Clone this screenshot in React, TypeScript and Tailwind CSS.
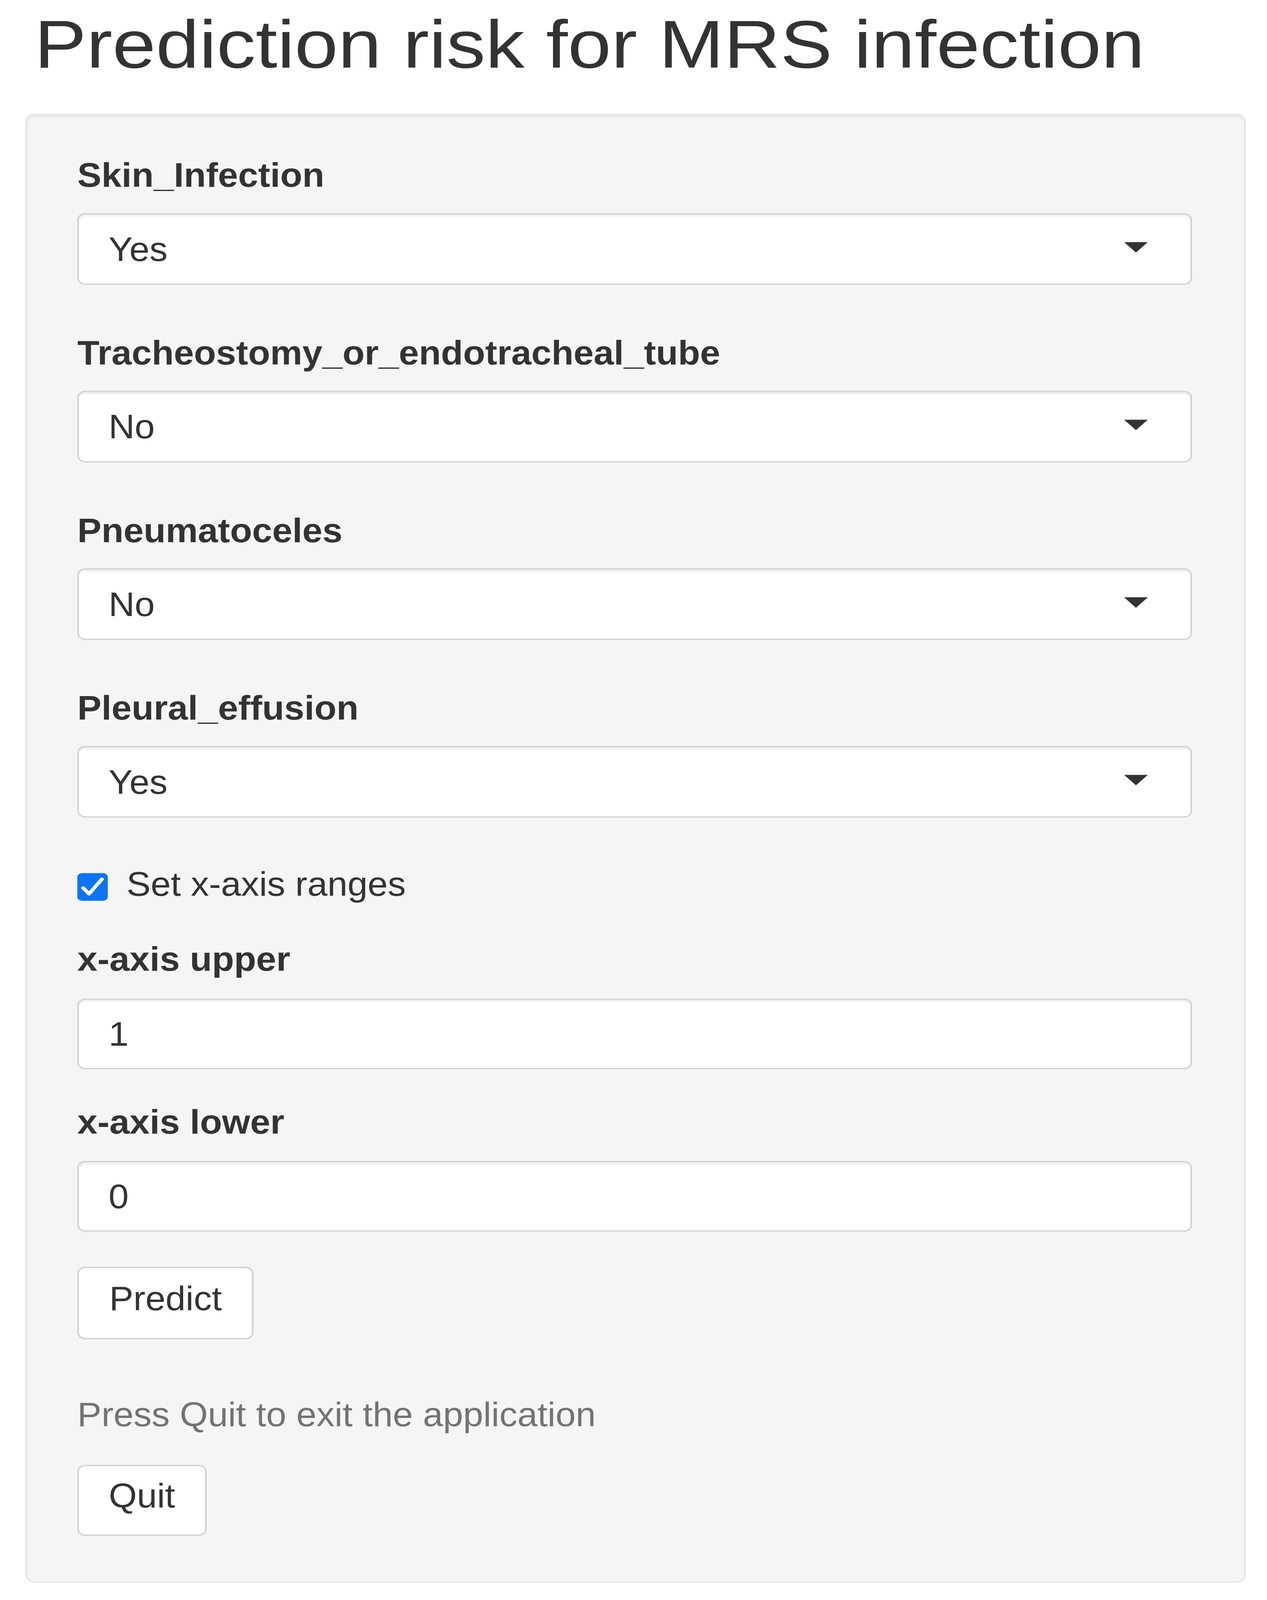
import React, { useEffect, useState } from "react";

function Label({ children, className = "" }: { children: React.ReactNode; className?: string }) {
  return (
    <div className={`h-[130px] text-[104px] leading-[130px] font-bold text-[#333333] whitespace-nowrap ${className}`}>
      <span className="inline-block origin-left scale-x-[0.89]">{children}</span>
    </div>
  );
}

function Select({ value, className = "" }: { value: string; className?: string }) {
  return (
    <div
      className={`flex h-[218px] items-center justify-between rounded-[20px] border-[4px] border-[#d3d3d3] bg-white pl-[76px] pr-[109px] shadow-[inset_0_6px_6px_rgba(0,0,0,0.075)] ${className}`}
    >
      <span className="inline-block origin-left scale-x-[0.89] text-[104px] text-[#333333]">{value}</span>
      <svg width="61" height="32" viewBox="0 0 61 32" className="mb-[10px]">
        <polygon points="0,0 61,0 30.5,32" fill="#333333" />
      </svg>
    </div>
  );
}

function NumInput({ value, className = "" }: { value: string; className?: string }) {
  return (
    <div
      className={`flex h-[215px] items-center rounded-[20px] border-[4px] border-[#d3d3d3] bg-white pl-[76px] shadow-[inset_0_6px_6px_rgba(0,0,0,0.075)] ${className}`}
    >
      <span className="inline-block origin-left scale-x-[0.89] text-[104px] text-[#333333]">{value}</span>
    </div>
  );
}

function Btn({ label, w, h, className = "" }: { label: string; w: string; h: string; className?: string }) {
  return (
    <button
      type="button"
      className={`flex items-center justify-center rounded-[20px] border-[4px] border-[#d0d0d0] bg-white pb-[28px] ${w} ${h} ${className}`}
    >
      <span className="inline-block scale-x-[0.89] text-[104px] text-[#333333]">{label}</span>
    </button>
  );
}

export default function App() {
  const [vh, setVh] = useState(4865);
  useEffect(() => {
    setVh(document.documentElement.clientHeight || 4865);
  }, []);
  const sy = Math.min(1, vh / 4865);

  return (
    <div className="h-screen w-full overflow-hidden bg-white">
      <div
        className="relative h-[4865px] w-[3244px] origin-top-left bg-white pt-[19px] font-['Liberation_Sans',Arial,sans-serif]"
        style={{ transform: `scaleY(${sy})` }}
      >
        <h2 className="h-[230px] pl-[88px] text-[206px] leading-[230px] font-normal text-[#333333] whitespace-nowrap">
          <span className="inline-block origin-left scale-x-[0.97]">Prediction risk for MRS infection</span>
        </h2>

        <div className="mt-[97px] ml-[65px] w-[3125px] rounded-[24px] border-[4px] border-[#e5e5e5] bg-[#f5f5f5] pt-[117px] pb-[138px] pl-[129px] pr-[134px] shadow-[inset_0_6px_6px_rgba(0,0,0,0.05)]">
          <Label>Skin_Infection</Label>
          <Select value="Yes" className="mt-[51px]" />

          <Label className="mt-[141px]">Tracheostomy_or_endotracheal_tube</Label>
          <Select value="No" className="mt-[51px]" />

          <Label className="mt-[141px]">Pneumatoceles</Label>
          <Select value="No" className="mt-[51px]" />

          <Label className="mt-[141px]">Pleural_effusion</Label>
          <Select value="Yes" className="mt-[51px]" />

          <div className="mt-[136px] flex h-[130px] items-start">
            <div className="mt-[33px] flex h-[84px] w-[78px] items-center justify-center rounded-[12px] bg-[#0b74f5]">
              <svg width="78" height="84" viewBox="0 0 78 84">
                <polyline
                  points="15,45 30,63 63,18"
                  fill="none"
                  stroke="#ffffff"
                  strokeWidth="10"
                  strokeLinecap="round"
                  strokeLinejoin="round"
                />
              </svg>
            </div>
            <span className="ml-[48px] inline-block origin-left scale-x-[0.89] text-[104px] leading-[130px] text-[#333333] whitespace-nowrap">
              Set x-axis ranges
            </span>
          </div>

          <Label className="mt-[98px]">x-axis upper</Label>
          <NumInput value="1" className="mt-[56px]" />

          <Label className="mt-[95px]">x-axis lower</Label>
          <NumInput value="0" className="mt-[54px]" />

          <Btn label="Predict" w="w-[451px]" h="h-[220px]" className="mt-[107px]" />

          <div className="mt-[164px] h-[130px] text-[104px] leading-[130px] text-[#737373] whitespace-nowrap">
            <span className="inline-block origin-left scale-x-[0.89]">Press Quit to exit the application</span>
          </div>

          <Btn label="Quit" w="w-[331px]" h="h-[216px]" className="mt-[88px]" />
        </div>
      </div>
    </div>
  );
}
